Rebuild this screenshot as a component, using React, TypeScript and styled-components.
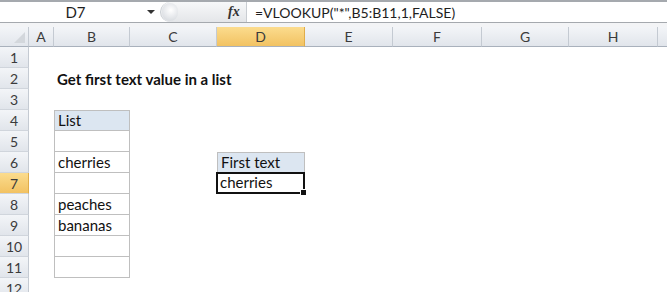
import { Fragment } from "react";
import { createGlobalStyle, styled } from "styled-components";

const GlobalStyle = createGlobalStyle`
  html, body {
    margin: 0;
    padding: 0;
    background: #ffffff;
    overflow: hidden;
  }
  body {
    font-family: Lato, "Open Sans", "Liberation Sans", sans-serif;
  }
`;

const Window = styled.div`
  width: 667px;
  height: 292px;
  overflow: hidden;
  background: #ffffff;
  display: flex;
  flex-direction: column;
  & > * {
    flex: none;
  }
`;

const FormulaBar = styled.div`
  height: 20px;
  border-top: 2px solid #a5a9ae;
  border-bottom: 1px solid #a5a9ae;
  display: flex;
  align-items: stretch;
  background: #ffffff;
`;

const NameBox = styled.div`
  width: 160px;
  display: flex;
  align-items: center;
  font-size: 15px;
  color: #1e1e1e;
`;

const NameText = styled.span`
  flex: 1;
  text-align: center;
  padding-left: 4px;
`;

const DropArrow = styled.span`
  width: 0;
  height: 0;
  border-left: 4px solid transparent;
  border-right: 4px solid transparent;
  border-top: 4px solid #333;
  margin-right: 5px;
`;

const Splitter = styled.div`
  width: 84px;
  background: linear-gradient(#f7f8f9, #e4e6e9);
  border-radius: 10px 0 0 10px;
  border-left: 1px solid #c9cdd2;
  display: flex;
  align-items: center;
  padding-left: 1px;
`;

const Knob = styled.div`
  width: 16px;
  height: 18px;
  border-radius: 9px;
  background: radial-gradient(circle at 55% 40%, #ffffff 0, #e9ebee 45%, #cfd3d8 100%);
`;

const Fx = styled.div`
  margin-left: auto;
  width: 18px;
  font-family: "Liberation Serif", serif;
  font-style: italic;
  font-weight: bold;
  font-size: 14px;
  color: #333;
  display: flex;
  align-items: center;
`;

const FormulaText = styled.div`
  flex: 1;
  border-left: 1px solid #c9cdd2;
  padding-left: 8px;
  display: flex;
  align-items: center;
  font-size: 14px;
  color: #1e1e1e;
`;

const Gap = styled.div`
  height: 4px;
  background: #f3f4f6;
`;

const Grid = styled.div`
  display: grid;
  grid-template-columns: 29px 25px 76px 87px 88px 88px 89px 87px 89px 89px;
  grid-template-rows: 20px;
  grid-auto-rows: 21px;
`;

const Corner = styled.div`
  background: linear-gradient(#f3f5f8, #e2e6ec);
  border-right: 1px solid #c4cad2;
  border-bottom: 1px solid #a9b1bc;
  position: relative;
  &::after {
    content: "";
    position: absolute;
    right: 3px;
    bottom: 3px;
    border-left: 11px solid transparent;
    border-bottom: 11px solid #d3d7dc;
  }
`;

const Header = styled.div<{ $active?: boolean; $row?: boolean }>`
  background: ${(p) =>
    p.$active
      ? "linear-gradient(#fbdc8e, #f2c262)"
      : "linear-gradient(#f3f5f8, #e1e5eb)"};
  border-right: 1px solid ${(p) => (p.$active ? "#e0ad4a" : "#c4cad2")};
  border-bottom: 1px solid ${(p) => (p.$row ? "#d0d5dc" : "#a9b1bc")};
  color: #3b3b3b;
  font-size: 14px;
  display: flex;
  align-items: center;
  justify-content: center;
  padding-top: ${(p) => (p.$row ? "1px" : "0")};
`;

const Cell = styled.div<{
  $boxed?: boolean;
  $top?: boolean;
  $head?: boolean;
  $bold?: boolean;
  $selected?: boolean;
}>`
  box-sizing: border-box;
  font-size: 15px;
  color: #111;
  font-weight: ${(p) => (p.$bold ? 700 : 400)};
  white-space: nowrap;
  display: flex;
  align-items: flex-end;
  padding: 0 0 1px 3px;
  background: ${(p) => (p.$head ? "#dce6f1" : "transparent")};
  border-left: ${(p) => (p.$boxed ? "1px solid #bfbfbf" : "none")};
  border-right: ${(p) => (p.$boxed ? "1px solid #bfbfbf" : "none")};
  border-bottom: ${(p) => (p.$boxed ? "1px solid #bfbfbf" : "none")};
  border-top: ${(p) => (p.$top ? "1px solid #bfbfbf" : "none")};
  ${(p) =>
    p.$selected &&
    `
    position: relative;
    border: 2px solid #111;
    margin: -1px 0 0 -1px;
    padding-left: 2px;
    &::after {
      content: "";
      position: absolute;
      right: -4px;
      bottom: -4px;
      width: 5px;
      height: 5px;
      background: #111;
      border: 1px solid #fff;
    }
  `}
`;

const columns = ["A", "B", "C", "D", "E", "F", "G", "H", "I"];

type CellData = {
  text?: string;
  boxed?: boolean;
  top?: boolean;
  head?: boolean;
  bold?: boolean;
  selected?: boolean;
};

const data: Record<string, CellData> = {
  B2: { text: "Get first text value in a list", bold: true },
  B4: { text: "List", boxed: true, top: true, head: true },
  B5: { boxed: true },
  B6: { text: "cherries", boxed: true },
  B7: { boxed: true },
  B8: { text: "peaches", boxed: true },
  B9: { text: "bananas", boxed: true },
  B10: { boxed: true },
  B11: { boxed: true },
  D6: { text: "First text", boxed: true, top: true, head: true },
  D7: { text: "cherries", selected: true },
};

export default function App() {
  const rows = Array.from({ length: 12 }, (_, i) => i + 1);
  return (
    <>
      <GlobalStyle />
      <Window>
        <FormulaBar>
          <NameBox>
            <NameText>D7</NameText>
            <DropArrow />
          </NameBox>
          <Splitter>
            <Knob />
            <Fx>fx</Fx>
          </Splitter>
          <FormulaText>=VLOOKUP("*",B5:B11,1,FALSE)</FormulaText>
        </FormulaBar>
        <Gap />
        <Grid>
          <Corner />
          {columns.map((c) => (
            <Header key={c} $active={c === "D"}>
              {c}
            </Header>
          ))}
          {rows.map((r) => (
            <Fragment key={r}>
              <Header $row $active={r === 7}>
                {r}
              </Header>
              {columns.map((c) => {
                const d = data[c + r] || {};
                return (
                  <Cell
                    key={c + r}
                    $boxed={d.boxed}
                    $top={d.top}
                    $head={d.head}
                    $bold={d.bold}
                    $selected={d.selected}
                  >
                    {d.text}
                  </Cell>
                );
              })}
            </Fragment>
          ))}
        </Grid>
      </Window>
    </>
  );
}
